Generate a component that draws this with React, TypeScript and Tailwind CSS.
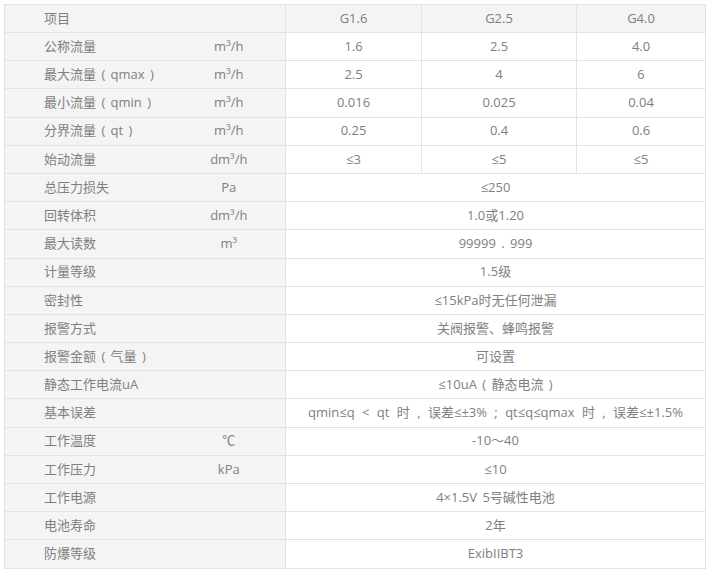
import React from "react";

type Row = { name: string; unit?: string; vals: string[]; wide?: boolean };

const rows: Row[] = [
  { name: "公称流量", unit: "m³/h", vals: ["1.6", "2.5", "4.0"] },
  { name: "最大流量 ( qmax )", unit: "m³/h", vals: ["2.5", "4", "6"] },
  { name: "最小流量 ( qmin )", unit: "m³/h", vals: ["0.016", "0.025", "0.04"] },
  { name: "分界流量 ( qt )", unit: "m³/h", vals: ["0.25", "0.4", "0.6"] },
  { name: "始动流量", unit: "dm³/h", vals: ["≤3", "≤5", "≤5"] },
  { name: "总压力损失", unit: "Pa", vals: ["≤250"] },
  { name: "回转体积", unit: "dm³/h", vals: ["1.0或1.20"] },
  { name: "最大读数", unit: "m³", vals: ["99999 . 999"] },
  { name: "计量等级", vals: ["1.5级"] },
  { name: "密封性", vals: ["≤15kPa时无任何泄漏"] },
  { name: "报警方式", vals: ["关阀报警、蜂鸣报警"] },
  { name: "报警金额 ( 气量 )", vals: ["可设置"] },
  { name: "静态工作电流uA", vals: ["≤10uA ( 静态电流 )"] },
  { name: "基本误差", vals: ["qmin≤q < qt 时 , 误差≤±3% ; qt≤q≤qmax 时 , 误差≤±1.5%"], wide: true },
  { name: "工作温度", unit: "℃", vals: ["-10～40"] },
  { name: "工作压力", unit: "kPa", vals: ["≤10"] },
  { name: "工作电源", vals: ["4×1.5V 5号碱性电池"] },
  { name: "电池寿命", vals: ["2年"] },
  { name: "防爆等级", vals: ["ExibIIBT3"] },
];

export default function App() {
  return (
    <div
      className="w-[711px] h-[575px] bg-white pt-[4px] pl-[4px]"
      style={{ fontFamily: '"Open Sans", "Noto Sans CJK SC", sans-serif' }}
    >
      <table className="border-collapse table-fixed w-[701px] text-[13px] text-[#808080] border border-[#e2e2e2] [word-spacing:2px]">
        <colgroup>
          <col className="w-[168px]" />
          <col className="w-[113px]" />
          <col className="w-[136px]" />
          <col className="w-[155px]" />
          <col className="w-[129px]" />
        </colgroup>
        <tbody>
          <tr className="h-[28px] bg-[#f4f4f4]">
            <td colSpan={2} className="border border-[#e2e2e2] pl-[39px] text-left">项目</td>
            <td className="border border-[#e2e2e2] text-center">G1.6</td>
            <td className="border border-[#e2e2e2] text-center">G2.5</td>
            <td className="border border-[#e2e2e2] text-center">G4.0</td>
          </tr>
          {rows.map((r, i) => (
            <tr key={i} className="h-[28.2px]">
              <td className="bg-[#f4f4f4] border-y border-[#e2e2e2] pl-[39px] text-left whitespace-pre">
                {r.name}
              </td>
              <td className="bg-[#f4f4f4] border-y border-r border-[#e2e2e2] text-center">
                {r.unit ?? ""}
              </td>
              {r.vals.length === 3 ? (
                r.vals.map((v, j) => (
                  <td key={j} className="border border-[#e2e2e2] text-center bg-white">
                    {v}
                  </td>
                ))
              ) : (
                <td
                  colSpan={3}
                  className={
                    r.wide
                      ? "border border-[#e2e2e2] text-center bg-white whitespace-pre [word-spacing:4px]"
                      : "border border-[#e2e2e2] text-center bg-white whitespace-pre"
                  }
                >
                  {r.vals[0]}
                </td>
              )}
            </tr>
          ))}
        </tbody>
      </table>
    </div>
  );
}
